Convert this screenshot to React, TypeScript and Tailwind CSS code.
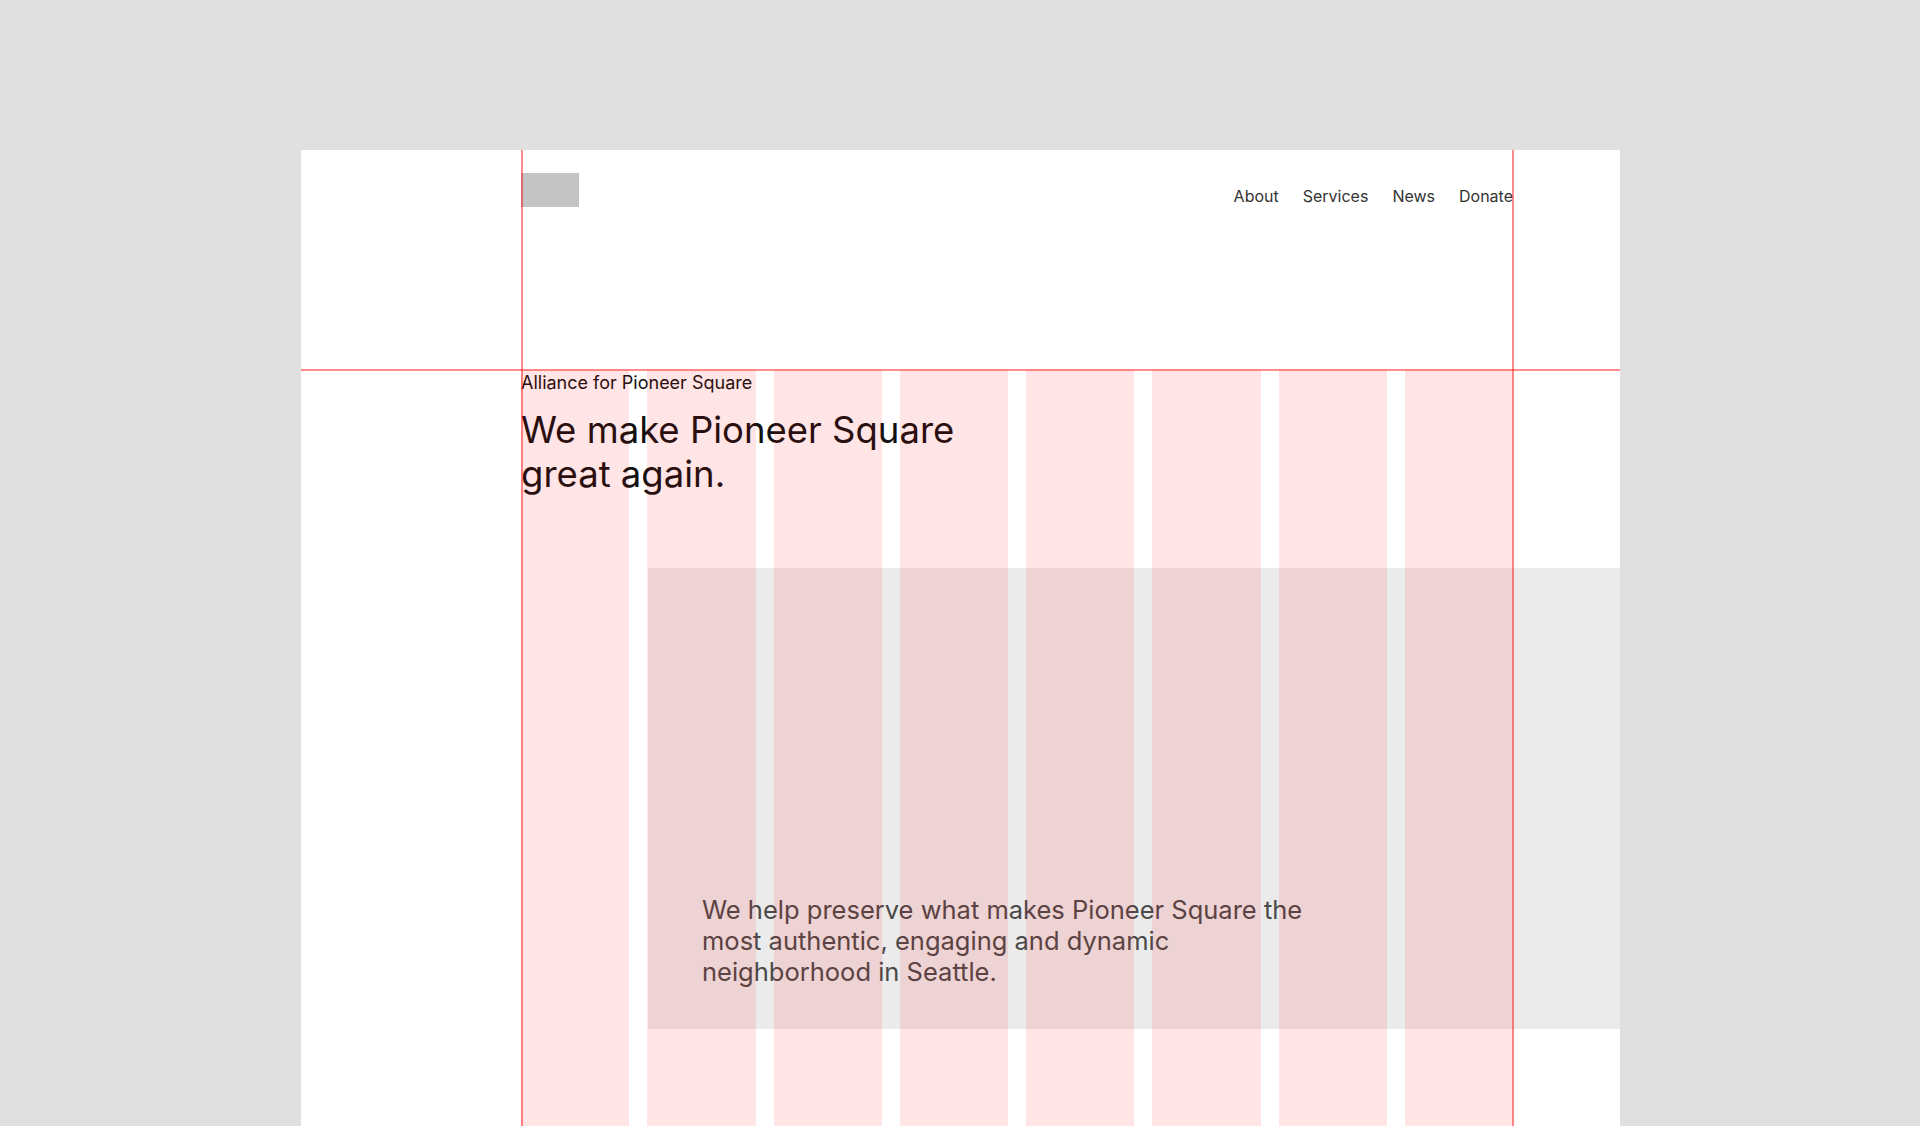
const navItems = ['About', 'Services', 'News', 'Donate'];
const columns = [0, 1, 2, 3, 4, 5, 6, 7];

export default function App() {
  return (
    <div className="h-[1126px] overflow-hidden bg-[#e0e0e0] pt-[150px] pl-[301px] font-['Inter','Noto_Sans',sans-serif] [font-optical-sizing:none]">
      <div className="relative h-full w-[1319px] bg-white">
        {/* Header */}
        <header className="flex h-[220px] items-start pt-[23px] pl-[220px] pr-[107px]">
          <div className="h-[34px] w-[58px] bg-[#c4c4c4]" />
          <nav className="ml-auto mt-[13px] flex gap-6 text-[16px] text-[#333]">
            {navItems.map((item) => (
              <a key={item} href="#" className="leading-5">
                {item}
              </a>
            ))}
          </nav>
        </header>

        {/* Hero */}
        <section className="h-[198px] pl-[220px] pt-[1.5px]">
          <p className="text-[18px] leading-[22px] text-[#111]">Alliance for Pioneer Square</p>
          <h1 className="mt-[14px] max-w-[480px] text-[36.5px] leading-[44px] text-[#111]">
            We make Pioneer Square great again.
          </h1>
        </section>

        {/* Gray band */}
        <section className="ml-[347px] flex h-[461px] items-end bg-[#ebebeb] pb-[42px] pl-[54px]">
          <p className="max-w-[625px] text-[25.5px] leading-[31px] text-[#4a4a4a]">
            We help preserve what makes Pioneer Square the most authentic, engaging and dynamic neighborhood in Seattle.
          </p>
        </section>

        {/* Layout grid overlay */}
        <div className="pointer-events-none absolute top-[220px] bottom-0 left-[220px] grid w-[992px] grid-cols-8 gap-x-[18px]">
          {columns.map((c) => (
            <div key={c} className="bg-[rgba(255,0,0,0.1)]" />
          ))}
        </div>
        <div className="pointer-events-none absolute top-[219px] left-0 h-[2px] w-full bg-[rgba(255,0,0,0.45)]" />
        <div className="pointer-events-none absolute top-0 bottom-0 left-[220px] w-[2px] bg-[rgba(255,0,0,0.45)]" />
        <div className="pointer-events-none absolute top-0 bottom-0 left-[1211px] w-[2px] bg-[rgba(255,0,0,0.45)]" />
      </div>
    </div>
  );
}
